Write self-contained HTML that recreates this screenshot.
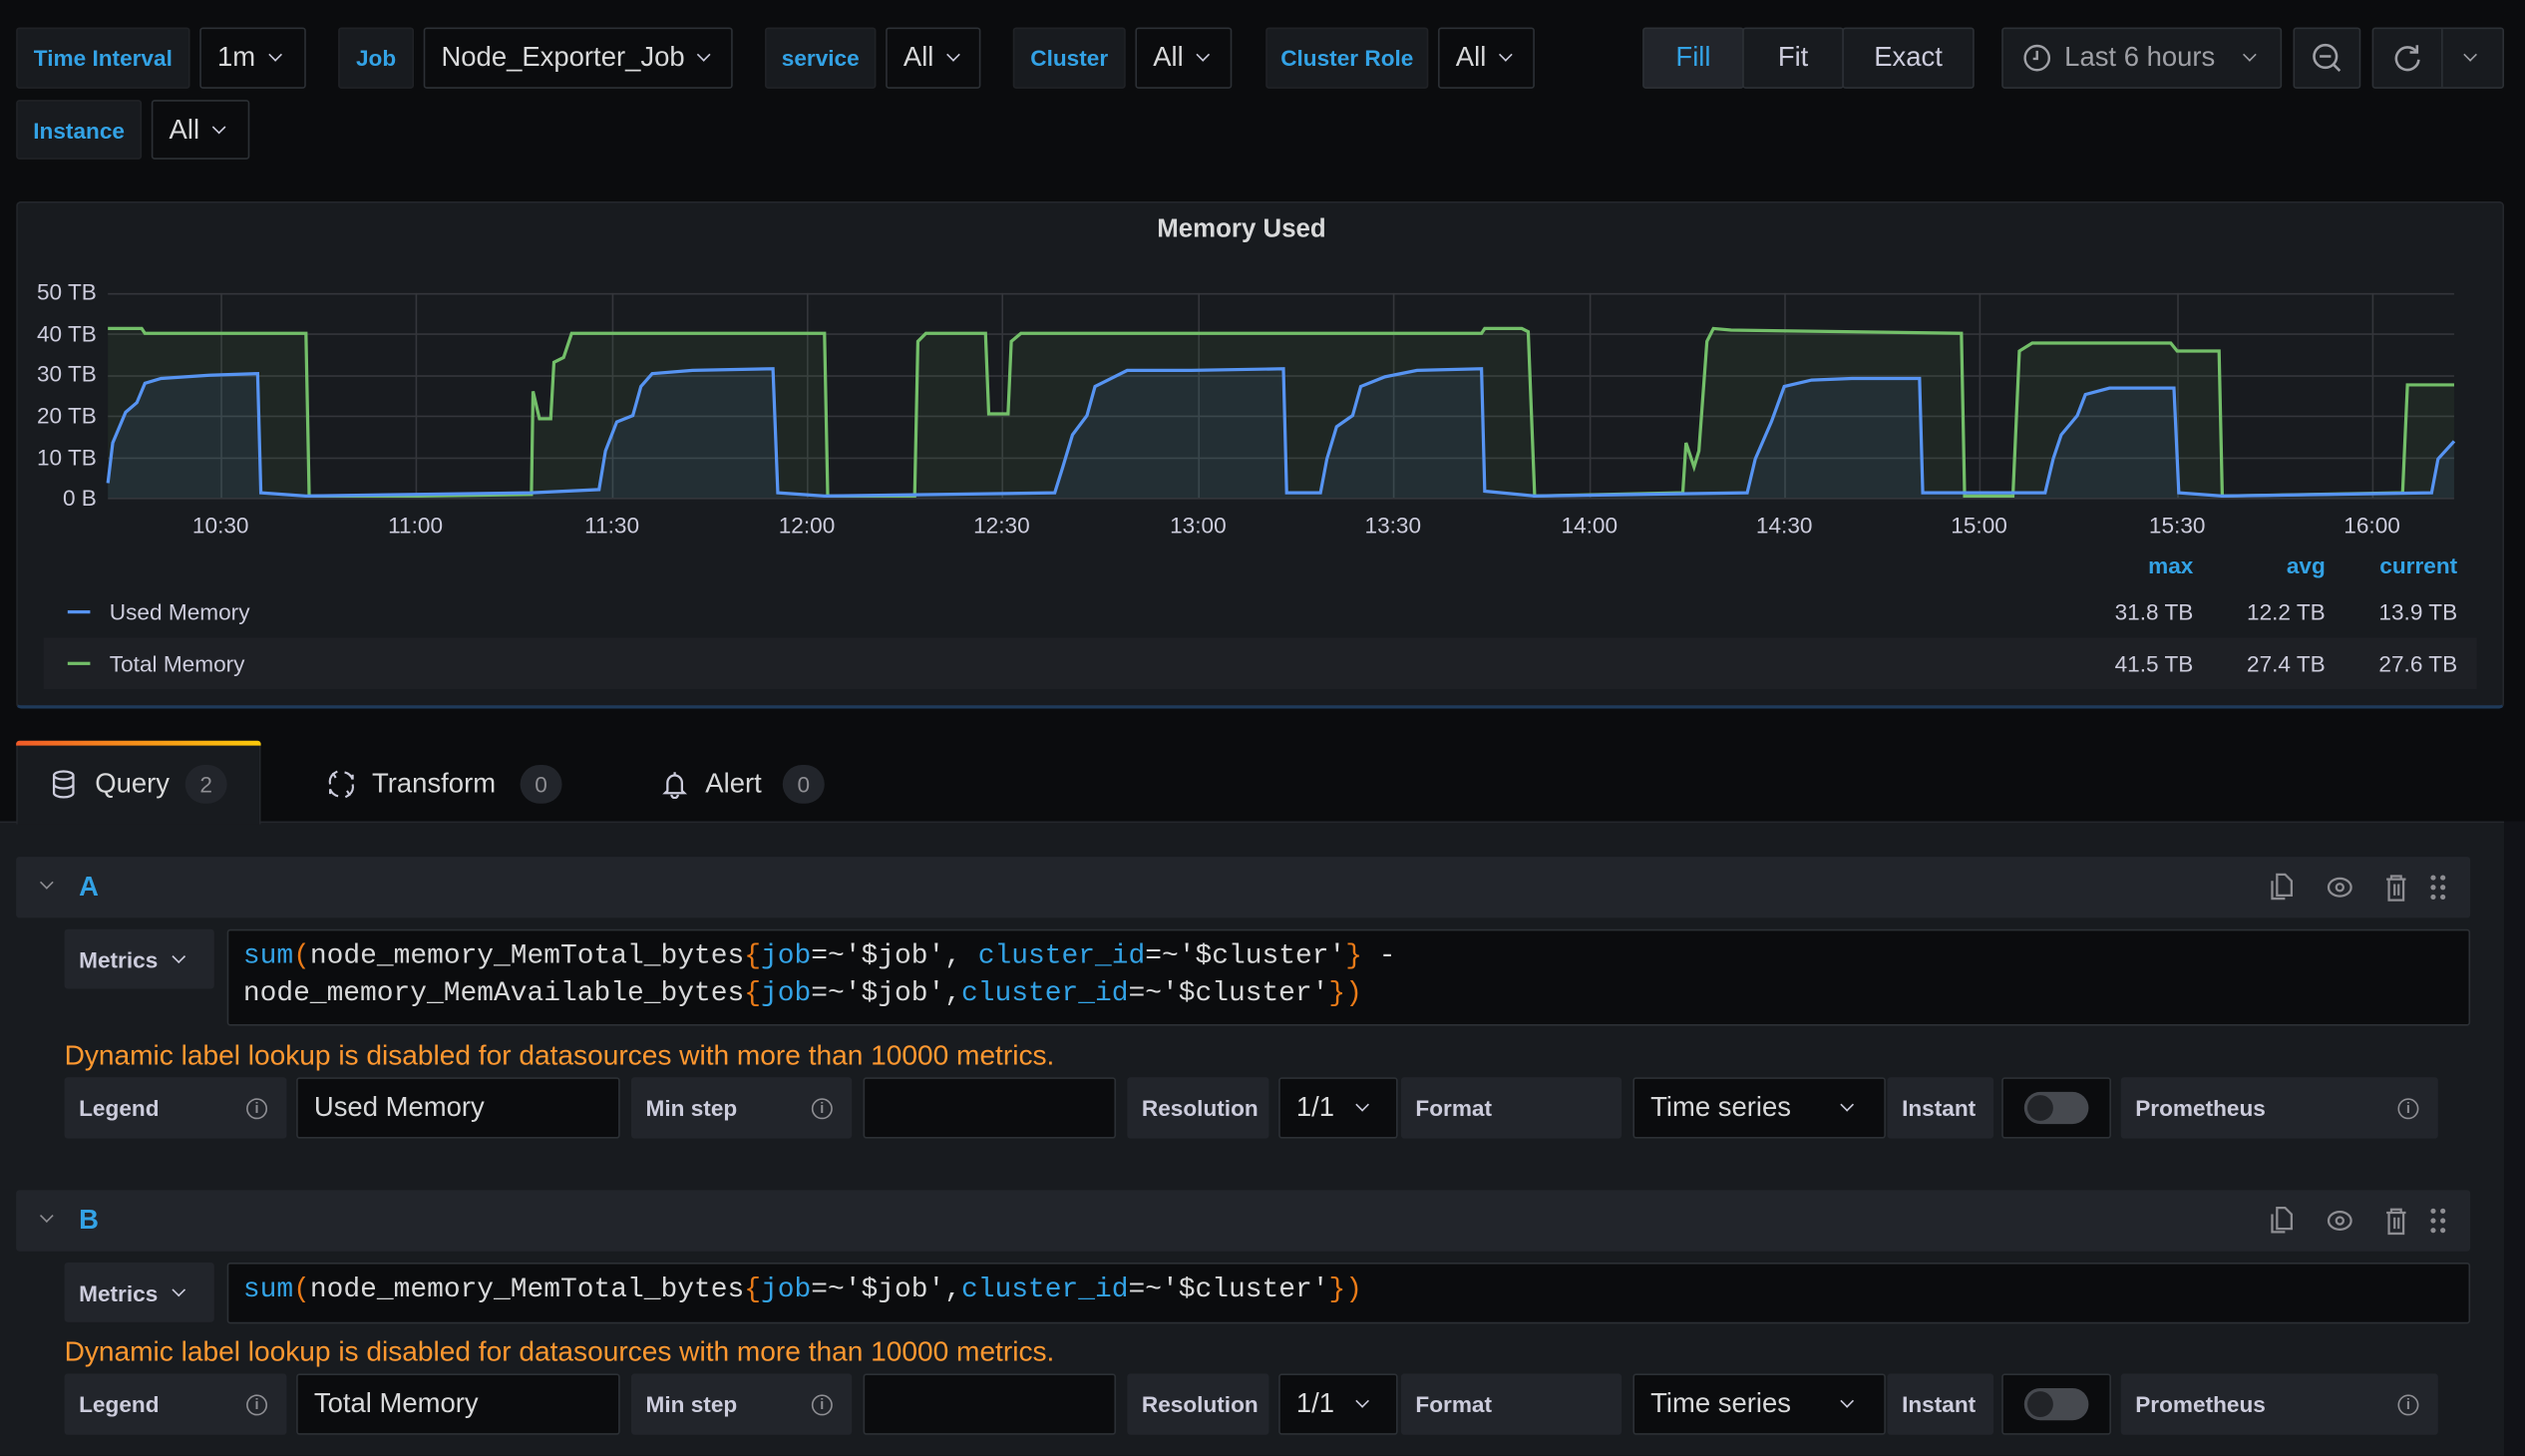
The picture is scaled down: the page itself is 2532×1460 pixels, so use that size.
<!DOCTYPE html>
<html><head><meta charset="utf-8">
<style>
*{box-sizing:border-box;margin:0;padding:0}
html,body{width:2532px;height:1460px;overflow:hidden;background:#0b0c0e}
#s{position:absolute;left:0;top:0;width:1568px;height:904px;transform:scale(1.6148);transform-origin:0 0;font-family:"Liberation Sans",sans-serif;color:#ccccdc;background:#0b0c0e}
.a{position:absolute}
.lab{position:absolute;background:#181b1f;border:1px solid #202226;border-radius:2px;color:#33a2e5;font-weight:bold;font-size:14px;display:flex;align-items:center;justify-content:center}
.val{position:absolute;background:#0b0c0e;border:1px solid #2c3035;border-radius:2px;color:#d8d9da;font-size:17px;display:flex;align-items:center;padding-left:10px}
.chev{display:inline-block;width:6px;height:6px;border-right:1.5px solid #ccccdc;border-bottom:1.5px solid #ccccdc;transform:rotate(45deg);margin-left:9px;margin-top:-4px}
.btn{position:absolute;background:#181b1f;border:1px solid #2c3035;border-radius:2px;color:#ccccdc;font-size:17px;display:flex;align-items:center;justify-content:center}
.yl{position:absolute;font-size:14px;color:#ccccdc;text-align:right;width:50px;left:10px}
.xl{position:absolute;font-size:14px;color:#ccccdc;top:318px;width:60px;text-align:center}
.ol{position:absolute;background:#22252b;color:#ccccdc;font-weight:bold;font-size:14px;display:flex;align-items:center;padding-left:9px;border-radius:2px;height:38px}
.ov{position:absolute;background:#0b0c0e;border:1px solid #2c3035;color:#d8d9da;font-size:17px;display:flex;align-items:center;padding-left:10px;border-radius:2px;height:38px}
.info{position:absolute;width:13px;height:13px;border:1.3px solid #8e8e93;border-radius:50%;font-size:9px;color:#8e8e93;text-align:center;line-height:11px;font-weight:bold}
.mono{font-family:"Liberation Mono",monospace;font-size:17.3px;color:#d8d9da;line-height:22.5px;white-space:pre}
.b{color:#33a2e5}.o{color:#eb7b18}
.warn{position:absolute;left:40px;color:#ff9830;font-size:17.4px}
.tog{position:absolute;width:40px;height:20px;border-radius:10px;background:#46494f}
.tog:after{content:"";position:absolute;left:2px;top:2px;width:16px;height:16px;border-radius:50%;background:#222428}
</style></head><body><div id="s">

<div class="lab" style="left:10px;top:17px;width:108px;height:38px">Time Interval</div>
<div class="val" style="left:124px;top:17px;width:66px;height:38px">1m<span class="chev"></span></div>
<div class="lab" style="left:210px;top:17px;width:47px;height:38px">Job</div>
<div class="val" style="left:263px;top:17px;width:192px;height:38px">Node_Exporter_Job<span class="chev"></span></div>
<div class="lab" style="left:475px;top:17px;width:69px;height:38px">service</div>
<div class="val" style="left:550px;top:17px;width:59px;height:38px">All<span class="chev"></span></div>
<div class="lab" style="left:629px;top:17px;width:70px;height:38px">Cluster</div>
<div class="val" style="left:705px;top:17px;width:60px;height:38px">All<span class="chev"></span></div>
<div class="lab" style="left:786px;top:17px;width:101px;height:38px">Cluster Role</div>
<div class="val" style="left:893px;top:17px;width:60px;height:38px">All<span class="chev"></span></div>
<div class="lab" style="left:10px;top:62px;width:78px;height:37px">Instance</div>
<div class="val" style="left:94px;top:62px;width:61px;height:37px">All<span class="chev"></span></div>

<div class="btn" style="left:1020px;top:17px;width:63px;height:38px;background:#22252b;color:#33a2e5">Fill</div>
<div class="btn" style="left:1082px;top:17px;width:63px;height:38px">Fit</div>
<div class="btn" style="left:1144px;top:17px;width:82px;height:38px">Exact</div>
<div class="btn" style="left:1243px;top:17px;width:174px;height:38px;justify-content:flex-start;padding-left:12px;color:#9fa0a6">
<svg width="18" height="18" viewBox="0 0 18 18" style="margin-right:8px"><circle cx="9" cy="9" r="7.5" fill="none" stroke="#9fa0a6" stroke-width="1.5"/><path d="M9 4.5V9.5H6.5" fill="none" stroke="#9fa0a6" stroke-width="1.5"/></svg>Last 6 hours<span class="chev" style="margin-left:18px;border-color:#9fa0a6"></span></div>
<div class="btn" style="left:1424px;top:17px;width:42px;height:38px"><svg width="20" height="20" viewBox="0 0 20 20"><circle cx="9" cy="9" r="7" fill="none" stroke="#9fa0a6" stroke-width="1.6"/><path d="M5.5 9h7M14 14l4 4" stroke="#9fa0a6" stroke-width="1.6"/></svg></div>
<div class="btn" style="left:1473px;top:17px;width:82px;height:38px;justify-content:flex-start">
<div style="width:43px;height:36px;border-right:1px solid #2c3035;display:flex;align-items:center;justify-content:center"><svg width="20" height="20" viewBox="0 0 20 20"><path d="M15.5 6A7 7 0 1 0 17 11" fill="none" stroke="#9fa0a6" stroke-width="1.6"/><path d="M16 2v4.5h-4.5" fill="none" stroke="#9fa0a6" stroke-width="1.6"/></svg></div>
<span class="chev" style="margin-left:14px;border-color:#9fa0a6"></span></div>

<div class="a" style="left:10px;top:125px;width:1545px;height:315px;background:#181b1f;border:1px solid #24272c;border-bottom:2px solid #1f3a5a;border-radius:3px"></div>
<div class="a" style="left:0;top:134px;width:1542px;text-align:center;font-size:16px;font-weight:bold;color:#d8d9da">Memory Used</div>
<div class="yl" style="top:173px">50 TB</div>
<div class="yl" style="top:199px">40 TB</div>
<div class="yl" style="top:224px">30 TB</div>
<div class="yl" style="top:250px">20 TB</div>
<div class="yl" style="top:276px">10 TB</div>
<div class="yl" style="top:301px">0 B</div>
<svg class="a" style="left:0;top:0" width="1568" height="330" viewBox="0 0 1568 330">
<g stroke="#34363b" stroke-width="1">
<path d="M67 182.5H1524M67 207.5H1524M67 233.5H1524M67 258.5H1524M67 284.5H1524M67 309.5H1524"/>
<path d="M137.5 182V309M258.5 182V309M380.5 182V309M501.5 182V309M622.5 182V309M744.5 182V309M865.5 182V309M987.5 182V309M1108.5 182V309M1229.5 182V309M1352.5 182V309M1473.5 182V309"/>
</g>
<path fill="rgba(115,191,105,0.08)" d="M67 309L67 204L88 204L90 207L190 207L192 308L260 308L330 307L331 243L335 260L342 260L344 225L350 222L355 207L512 207L514 308L568 308L570 212L575 207L612 207L614 257L626 257L628 212L634 207L920 207L922 204L945 204L949 206L953 308L1045 306L1047 275L1052 290L1055 280L1060 212L1064 204L1075 205L1218 207L1220 308L1250 308L1254 218L1262 213L1348 213L1352 218L1378 218L1380 308L1492 306L1495 239L1524 239L1524 309Z"/>
<path fill="rgba(87,148,242,0.08)" d="M67 309L67 300L70 275L78 256L85 250L90 238L100 235L130 233L160 232L162 306L190 308L330 306L372 304L376 280L383 262L393 258L398 240L405 232L430 230L480 229L483 306L512 308L655 306L660 290L666 270L675 258L680 240L700 230L740 230L797 229L799 306L820 306L824 285L830 265L840 258L845 240L860 234L880 230L920 229L922 305L953 308L1085 306L1090 285L1100 262L1108 240L1125 236L1150 235L1192 235L1194 306L1270 306L1275 285L1280 270L1290 258L1295 245L1310 241L1350 241L1353 306L1380 308L1510 306L1514 285L1524 274L1524 309Z"/>
<path fill="none" stroke="#73bf69" stroke-width="2" d="M67 204L88 204L90 207L190 207L192 308L260 308L330 307L331 243L335 260L342 260L344 225L350 222L355 207L512 207L514 308L568 308L570 212L575 207L612 207L614 257L626 257L628 212L634 207L920 207L922 204L945 204L949 206L953 308L1045 306L1047 275L1052 290L1055 280L1060 212L1064 204L1075 205L1218 207L1220 308L1250 308L1254 218L1262 213L1348 213L1352 218L1378 218L1380 308L1492 306L1495 239L1524 239"/>
<path fill="none" stroke="#5794f2" stroke-width="2" d="M67 300L70 275L78 256L85 250L90 238L100 235L130 233L160 232L162 306L190 308L330 306L372 304L376 280L383 262L393 258L398 240L405 232L430 230L480 229L483 306L512 308L655 306L660 290L666 270L675 258L680 240L700 230L740 230L797 229L799 306L820 306L824 285L830 265L840 258L845 240L860 234L880 230L920 229L922 305L953 308L1085 306L1090 285L1100 262L1108 240L1125 236L1150 235L1192 235L1194 306L1270 306L1275 285L1280 270L1290 258L1295 245L1310 241L1350 241L1353 306L1380 308L1510 306L1514 285L1524 274"/>
</svg>
<div class="xl" style="left:107px">10:30</div><div class="xl" style="left:228px">11:00</div><div class="xl" style="left:350px">11:30</div><div class="xl" style="left:471px">12:00</div><div class="xl" style="left:592px">12:30</div><div class="xl" style="left:714px">13:00</div><div class="xl" style="left:835px">13:30</div><div class="xl" style="left:957px">14:00</div><div class="xl" style="left:1078px">14:30</div><div class="xl" style="left:1199px">15:00</div><div class="xl" style="left:1322px">15:30</div><div class="xl" style="left:1443px">16:00</div>

<div class="a" style="left:1300px;top:343px;width:62px;text-align:right;font-size:14px;font-weight:bold;color:#33a2e5">max</div>
<div class="a" style="left:1380px;top:343px;width:64px;text-align:right;font-size:14px;font-weight:bold;color:#33a2e5">avg</div>
<div class="a" style="left:1450px;top:343px;width:76px;text-align:right;font-size:14px;font-weight:bold;color:#33a2e5">current</div>
<div class="a" style="left:27px;top:396px;width:1511px;height:32px;background:#1e2025"></div>
<div class="a" style="left:42px;top:379px;width:14px;height:2px;background:#5794f2"></div>
<div class="a" style="left:68px;top:372px;font-size:14px;color:#ccccdc">Used Memory</div>
<div class="a" style="left:42px;top:411px;width:14px;height:2px;background:#73bf69"></div>
<div class="a" style="left:68px;top:404px;font-size:14px;color:#ccccdc">Total Memory</div>
<div class="a" style="left:1290px;top:372px;width:72px;text-align:right;font-size:14px">31.8 TB</div>
<div class="a" style="left:1372px;top:372px;width:72px;text-align:right;font-size:14px">12.2 TB</div>
<div class="a" style="left:1454px;top:372px;width:72px;text-align:right;font-size:14px">13.9 TB</div>
<div class="a" style="left:1290px;top:404px;width:72px;text-align:right;font-size:14px">41.5 TB</div>
<div class="a" style="left:1372px;top:404px;width:72px;text-align:right;font-size:14px">27.4 TB</div>
<div class="a" style="left:1454px;top:404px;width:72px;text-align:right;font-size:14px">27.6 TB</div>

<div class="a" style="left:0;top:510px;width:1555px;height:394px;background:#181b1f;border-top:1px solid #24272c"></div>
<div class="a" style="left:1555px;top:510px;width:13px;height:394px;background:#111217"></div>
<div class="a" style="left:10px;top:460px;width:152px;height:52px;background:#181b1f;border-left:1px solid #24272c;border-right:1px solid #24272c;border-radius:2px 2px 0 0"></div>
<div class="a" style="left:10px;top:460px;width:152px;height:3px;background:linear-gradient(90deg,#f05a28,#fbca0a);border-radius:2px 2px 0 0"></div>
<svg class="a" style="left:32px;top:478px" width="15" height="18" viewBox="0 0 15 18"><ellipse cx="7.5" cy="3.5" rx="6" ry="2.5" fill="none" stroke="#ccccdc" stroke-width="1.4"/><path d="M1.5 3.5v11c0 1.4 2.7 2.5 6 2.5s6-1.1 6-2.5v-11M1.5 9c0 1.4 2.7 2.5 6 2.5s6-1.1 6-2.5" fill="none" stroke="#ccccdc" stroke-width="1.4"/></svg>
<div class="a" style="left:59px;top:477px;font-size:17px;color:#d8d9da">Query</div>
<div class="a" style="left:115px;top:475px;width:26px;height:24px;border-radius:12px;background:#22252b;color:#8e8e93;font-size:14px;text-align:center;line-height:24px">2</div>
<svg class="a" style="left:203px;top:478px" width="18" height="18" viewBox="0 0 18 18"><path d="M4 2.5A7 7 0 0 0 2 9M6.5 1l-2.5 1.5 1.5 2.5M14 15.5A7 7 0 0 0 16 9M11.5 17l2.5-1.5-1.5-2.5M11 1.6A7 7 0 0 1 16 6M16 6v-3M7 16.4A7 7 0 0 1 2 12M2 12v3" fill="none" stroke="#ccccdc" stroke-width="1.3"/></svg>
<div class="a" style="left:231px;top:477px;font-size:17px;color:#d8d9da">Transform</div>
<div class="a" style="left:323px;top:475px;width:26px;height:24px;border-radius:12px;background:#22252b;color:#8e8e93;font-size:14px;text-align:center;line-height:24px">0</div>
<svg class="a" style="left:411px;top:478px" width="16" height="18" viewBox="0 0 16 18"><path d="M8 1.5v1.5M3.5 13V8a4.5 4.5 0 0 1 9 0v5l1.5 1.5H2z M6 15.5a2 2 0 0 0 4 0" fill="none" stroke="#ccccdc" stroke-width="1.4"/></svg>
<div class="a" style="left:438px;top:477px;font-size:17px;color:#d8d9da">Alert</div>
<div class="a" style="left:486px;top:475px;width:26px;height:24px;border-radius:12px;background:#22252b;color:#8e8e93;font-size:14px;text-align:center;line-height:24px">0</div>

<div class="a" style="left:10px;top:532px;width:1524px;height:38px;background:#22252b;border-radius:2px"></div>
<span class="chev a" style="left:26px;top:545px;border-color:#8e8e93;width:6px;height:6px;margin:0"></span>
<div class="a" style="left:49px;top:541px;font-size:17px;font-weight:bold;color:#33a2e5">A</div>
<svg class="a" style="left:1408px;top:541px" width="115" height="20" viewBox="0 0 115 20">
<g fill="none" stroke="#8e8e93" stroke-width="1.4"><path d="M3 6v11h8M6 2h5l4 4v9H6z"/><ellipse cx="45" cy="10" rx="7" ry="5.5"/><circle cx="45" cy="10" r="2.2"/><path d="M74 5h12M77 5V3h6v2M75.5 5v13h9V5M79 8v7M81.5 8v7"/></g>
<g fill="#8e8e93"><circle cx="103" cy="4" r="1.6"/><circle cx="109" cy="4" r="1.6"/><circle cx="103" cy="10" r="1.6"/><circle cx="109" cy="10" r="1.6"/><circle cx="103" cy="16" r="1.6"/><circle cx="109" cy="16" r="1.6"/></g></svg>
<div class="ol" style="left:40px;top:577px;width:93px;height:37px">Metrics<span class="chev" style="margin-left:10px"></span></div>
<div class="a" style="left:141px;top:577px;width:1393px;height:60px;background:#0b0c0e;border:1px solid #2c3035;border-radius:2px;padding:6px 0 0 9px"><div class="mono"><span class="b">sum</span><span class="o">(</span>node_memory_MemTotal_bytes<span class="o">{</span><span class="b">job</span>=~'$job', <span class="b">cluster_id</span>=~'$cluster'<span class="o">}</span> -
node_memory_MemAvailable_bytes<span class="o">{</span><span class="b">job</span>=~'$job',<span class="b">cluster_id</span>=~'$cluster'<span class="o">}</span><span class="o">)</span></div></div>
<div class="warn" style="top:645px">Dynamic label lookup is disabled for datasources with more than 10000 metrics.</div>
<div class="ol" style="left:40px;top:669px;width:138px">Legend</div><div class="info" style="left:153px;top:682px">i</div>
<div class="ov" style="left:184px;top:669px;width:201px">Used Memory</div>
<div class="ol" style="left:392px;top:669px;width:137px">Min step</div><div class="info" style="left:504px;top:682px">i</div>
<div class="ov" style="left:536px;top:669px;width:157px"></div>
<div class="ol" style="left:700px;top:669px;width:88px">Resolution</div>
<div class="ov" style="left:794px;top:669px;width:74px">1/1<span class="chev" style="margin-left:14px"></span></div>
<div class="ol" style="left:870px;top:669px;width:137px">Format</div>
<div class="ov" style="left:1014px;top:669px;width:157px">Time series<span class="chev" style="margin-left:32px"></span></div>
<div class="ol" style="left:1172px;top:669px;width:66px">Instant</div>
<div class="ov" style="left:1243px;top:669px;width:68px"></div><div class="tog" style="left:1257px;top:678px"></div>
<div class="ol" style="left:1317px;top:669px;width:197px">Prometheus</div><div class="info" style="left:1489px;top:682px">i</div>

<div class="a" style="left:10px;top:739px;width:1524px;height:38px;background:#22252b;border-radius:2px"></div>
<span class="chev a" style="left:26px;top:752px;border-color:#8e8e93;width:6px;height:6px;margin:0"></span>
<div class="a" style="left:49px;top:748px;font-size:17px;font-weight:bold;color:#33a2e5">B</div>
<svg class="a" style="left:1408px;top:748px" width="115" height="20" viewBox="0 0 115 20">
<g fill="none" stroke="#8e8e93" stroke-width="1.4"><path d="M3 6v11h8M6 2h5l4 4v9H6z"/><ellipse cx="45" cy="10" rx="7" ry="5.5"/><circle cx="45" cy="10" r="2.2"/><path d="M74 5h12M77 5V3h6v2M75.5 5v13h9V5M79 8v7M81.5 8v7"/></g>
<g fill="#8e8e93"><circle cx="103" cy="4" r="1.6"/><circle cx="109" cy="4" r="1.6"/><circle cx="103" cy="10" r="1.6"/><circle cx="109" cy="10" r="1.6"/><circle cx="103" cy="16" r="1.6"/><circle cx="109" cy="16" r="1.6"/></g></svg>
<div class="ol" style="left:40px;top:784px;width:93px;height:37px">Metrics<span class="chev" style="margin-left:10px"></span></div>
<div class="a" style="left:141px;top:784px;width:1393px;height:38px;background:#0b0c0e;border:1px solid #2c3035;border-radius:2px;padding:6px 0 0 9px"><div class="mono"><span class="b">sum</span><span class="o">(</span>node_memory_MemTotal_bytes<span class="o">{</span><span class="b">job</span>=~'$job',<span class="b">cluster_id</span>=~'$cluster'<span class="o">}</span><span class="o">)</span></div></div>
<div class="warn" style="top:829px">Dynamic label lookup is disabled for datasources with more than 10000 metrics.</div>
<div class="ol" style="left:40px;top:853px;width:138px">Legend</div><div class="info" style="left:153px;top:866px">i</div>
<div class="ov" style="left:184px;top:853px;width:201px">Total Memory</div>
<div class="ol" style="left:392px;top:853px;width:137px">Min step</div><div class="info" style="left:504px;top:866px">i</div>
<div class="ov" style="left:536px;top:853px;width:157px"></div>
<div class="ol" style="left:700px;top:853px;width:88px">Resolution</div>
<div class="ov" style="left:794px;top:853px;width:74px">1/1<span class="chev" style="margin-left:14px"></span></div>
<div class="ol" style="left:870px;top:853px;width:137px">Format</div>
<div class="ov" style="left:1014px;top:853px;width:157px">Time series<span class="chev" style="margin-left:32px"></span></div>
<div class="ol" style="left:1172px;top:853px;width:66px">Instant</div>
<div class="ov" style="left:1243px;top:853px;width:68px"></div><div class="tog" style="left:1257px;top:862px"></div>
<div class="ol" style="left:1317px;top:853px;width:197px">Prometheus</div><div class="info" style="left:1489px;top:866px">i</div>

</div></body></html>
